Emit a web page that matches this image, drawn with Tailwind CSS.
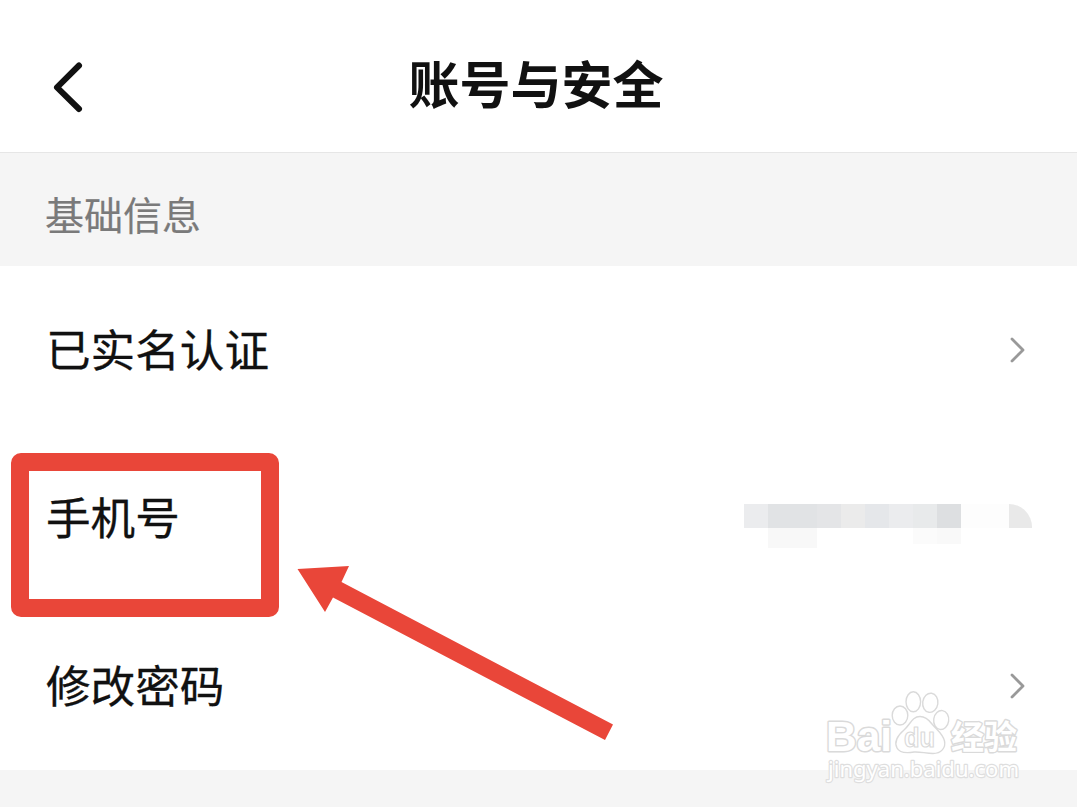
<!DOCTYPE html>
<html lang="zh-CN">
  <head>
    <meta charset="UTF-8" />
    <meta name="viewport" content="width=device-width, initial-scale=1.0" />
    <title>账号与安全</title>
    <script src="https://cdn.jsdelivr.net/npm/@tailwindcss/browser@4"></script>
  </head>

  <body class="bg-[#f5f5f5] text-[#111111] font-['Noto_Sans_CJK_SC',sans-serif] overflow-hidden">
    <div class="relative w-[1077px] h-[807px] overflow-hidden">
      <!-- Header -->
      <header class="grid grid-cols-[1fr_auto_1fr] items-center h-[153px] pt-[21px] pl-[50px] pr-[55px] bg-white border-b border-[#e6e6e6]">
        <button type="button" aria-label="返回" class="w-9 h-14">
          <svg class="w-9 h-14" viewBox="0 0 36 56" fill="none" stroke="#111" stroke-width="6" stroke-linecap="round" stroke-linejoin="round">
            <path d="M29 6.5 7 28.4 29 50" />
          </svg>
        </button>
        <h1 class="pb-[9px] text-[51px] leading-none font-bold">账号与安全</h1>
      </header>

      <!-- Basic info -->
      <h2 class="flex items-center h-[113px] pt-[8px] pl-[45px] text-[39px] leading-none text-[#7a7a7a] [-webkit-text-stroke:0.2px_#7a7a7a]">基础信息</h2>

      <ul class="bg-white text-[44.6px] leading-none [-webkit-text-stroke:0.3px_#111111]">
        <li class="flex items-center justify-between h-[168px] pl-[46px] pr-[52px]">
          <span class="pb-[4px]">已实名认证</span>
          <svg class="w-4 h-7" viewBox="0 0 16 28" fill="none" stroke="#999" stroke-width="2.8" stroke-linecap="round" stroke-linejoin="round">
            <path d="M3 3 14 14 3 25" />
          </svg>
        </li>
        <li class="flex items-center justify-between h-[168px] pl-[46px] pr-[45px]">
          <span class="pb-[4px]">手机号</span>
          <!-- masked number -->
          <div class="flex items-start h-[44px] mt-[16px]">
            <div class="w-6 h-6 bg-[#ebecee]"></div>
            <div class="w-[49px]">
              <div class="h-6 bg-[#e1e3e5]"></div>
              <div class="h-5 bg-[#f8f8f8]"></div>
            </div>
            <div class="w-6 h-6 bg-[#e4e5e7]"></div>
            <div class="w-6 h-6 bg-[#ebebeb]"></div>
            <div class="w-6 h-6 bg-[#e5e7ea]"></div>
            <div class="w-6 h-6 bg-[#ebecee]"></div>
            <div class="w-6">
              <div class="h-6 bg-[#e8eaeb]"></div>
              <div class="h-4 bg-[#fbfbfb]"></div>
            </div>
            <div class="w-6">
              <div class="h-6 bg-[#dddfe1]"></div>
              <div class="h-4 bg-[#f9f9f9]"></div>
            </div>
            <div class="w-12 h-6 bg-[#fdfdfd]"></div>
            <div class="w-[23px] h-6 rounded-tr-full bg-[#e9e9e9]"></div>
          </div>
        </li>
        <li class="flex items-center justify-between h-[168px] pl-[46px] pr-[52px]">
          <span class="pb-[4px]">修改密码</span>
          <svg class="w-4 h-7" viewBox="0 0 16 28" fill="none" stroke="#999" stroke-width="2.8" stroke-linecap="round" stroke-linejoin="round">
            <path d="M3 3 14 14 3 25" />
          </svg>
        </li>
      </ul>

      <!-- Highlight box and arrow -->
      <div class="absolute left-[11px] top-[453px] w-[268px] h-[164px] rounded-[10px] border-[18px] border-[#e94639]"></div>
      <svg class="absolute left-[280px] top-[550px] w-[350px] h-[200px]" viewBox="0 0 350 200" fill="#e94639">
        <path d="M17.5 19 69 16 61.5 32 333 174.500 325 190 53 47.500 45 62Z" />
      </svg>

      <!-- Watermark -->
      <svg class="absolute left-[810px] top-[680px] w-[230px] h-[110px]" viewBox="0 0 230 110" fill="#fff" stroke="#dadada" stroke-width="1.4" stroke-linejoin="round">
        <text class="font-['Liberation_Sans',sans-serif] font-bold" paint-order="stroke" stroke-width="3" x="16" y="71" font-size="43" textLength="66" lengthAdjust="spacingAndGlyphs">Bai</text>
        <ellipse cx="90" cy="35.5" rx="7.8" ry="9.5" />
        <ellipse cx="103.3" cy="21.8" rx="7.3" ry="10" />
        <ellipse cx="120.3" cy="22.8" rx="7.6" ry="9.6" transform="rotate(8 120.3 22.8)" />
        <ellipse cx="131.2" cy="40" rx="7.5" ry="9.5" transform="rotate(8 131.2 40)" />
        <path d="M110 36.500C102 36.500 100 45 94 50 87 56 84 62 87 68 90 74 98 73 104 72 110 71.500 116 73.500 123 73.500 131 73.500 136 68 134.500 61 133 54 127 50 122 44 119 40 116 36.500 110 36.500Z" />
        <text class="font-['Liberation_Sans',sans-serif] font-bold" stroke-width="1.2" x="94" y="67" font-size="27" textLength="31" lengthAdjust="spacingAndGlyphs">du</text>
        <text class="font-['Noto_Sans_CJK_SC',sans-serif] font-bold" paint-order="stroke" stroke-width="2.8" x="141" y="69" font-size="33" textLength="66" lengthAdjust="spacingAndGlyphs">经验</text>
        <text class="font-['Noto_Sans',sans-serif] font-normal" stroke="#dedede" paint-order="stroke" stroke-width="2.4" x="18" y="97" font-size="22" textLength="191" lengthAdjust="spacingAndGlyphs">jingyan.baidu.com</text>
      </svg>
    </div>
  </body>
</html>
